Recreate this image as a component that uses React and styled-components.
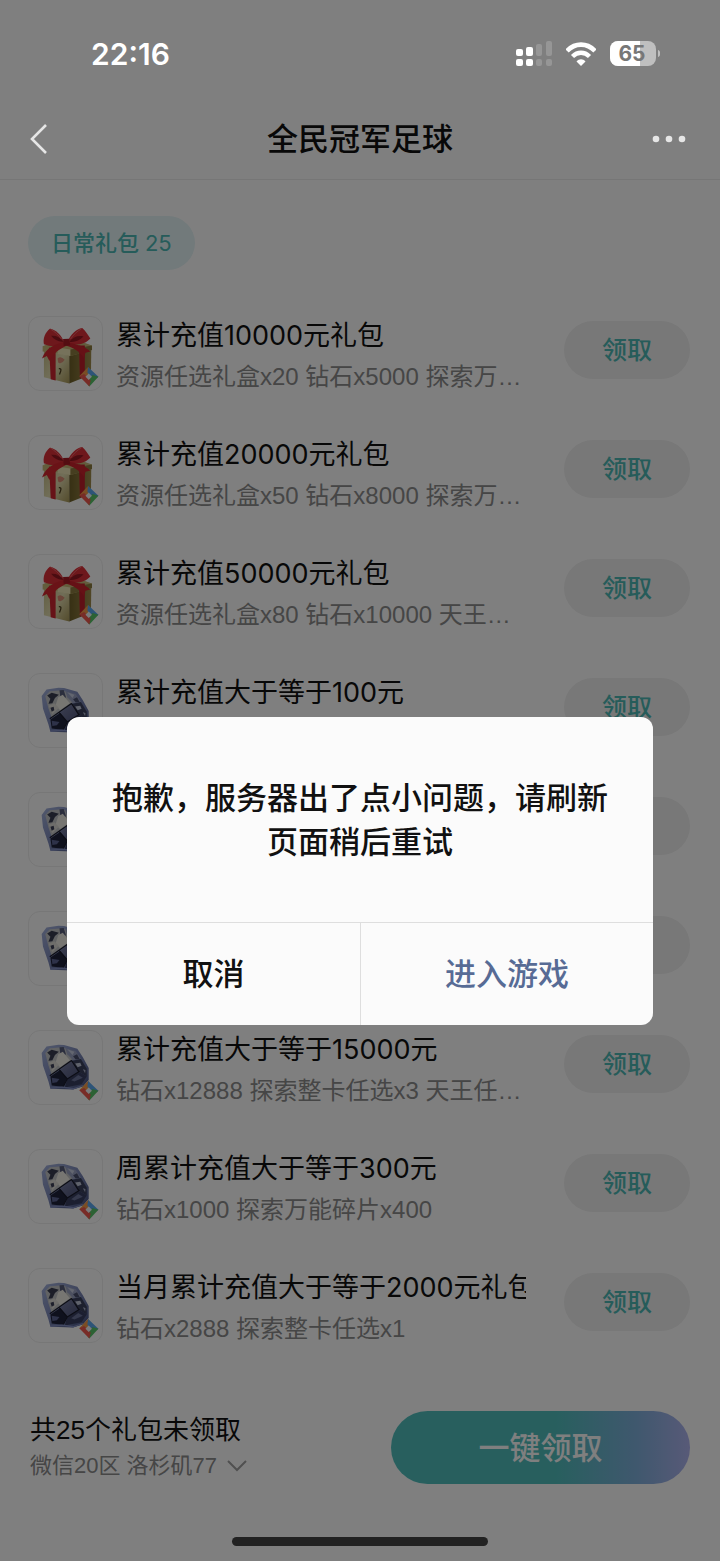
import React, { useState } from 'react';
import styled, { createGlobalStyle } from 'styled-components';

const GlobalStyle = createGlobalStyle`
  * {
    box-sizing: border-box;
  }

  body {
    margin: 0;
    background: #fff;
    font-family: Inter, 'Noto Sans CJK SC', sans-serif;
    color: #111;
  }

  button {
    font-family: inherit;
    border: none;
    padding: 0;
    cursor: pointer;
  }
`;

const Page = styled.div`
  position: relative;
  min-height: 100vh;
  display: flex;
  flex-direction: column;
`;

const StatusBar = styled.div`
  position: relative;
  z-index: 2;
  height: 98px;
  padding: 10px 60px 0 91px;
  display: flex;
  align-items: center;
  justify-content: space-between;
  color: #fff;
`;

const Clock = styled.span`
  font-size: 30px;
  font-weight: 600;
`;

const StatusIcons = styled.div`
  display: flex;
  align-items: center;
  gap: 14px;
`;

const NavBar = styled.header`
  height: 82px;
  padding: 0 28px;
  display: grid;
  grid-template-columns: 60px 1fr 60px;
  align-items: center;
  border-bottom: 1px solid #ececec;
`;

const NavTitle = styled.h1`
  margin: 0;
  font-size: 31px;
  line-height: 44px;
  font-weight: 500;
  text-align: center;
`;

const NavButton = styled.button`
  position: relative;
  z-index: 2;
  height: 60px;
  display: flex;
  align-items: center;
  justify-content: ${({ $end }) => ($end ? 'flex-end' : 'flex-start')};
  background: transparent;
`;

const Main = styled.main`
  flex: 1;
  padding: 36px 30px 0 28px;
`;

const Chip = styled.button`
  display: block;
  height: 54px;
  padding: 0 23px 4px;
  border-radius: 27px;
  background: #e4f4f6;
  color: #4cb8b4;
  font-size: 22px;
  font-weight: 500;
`;

const ChipCount = styled.span`
  font-weight: 400;
`;

const List = styled.ul`
  list-style: none;
  margin: 46px 0 0;
  padding: 0;
  display: flex;
  flex-direction: column;
  gap: 37px;
`;

const Row = styled.li`
  display: flex;
  align-items: flex-start;
`;

const Thumb = styled.div`
  flex: none;
  width: 75px;
  height: 75px;
  border: 1px solid #eee;
  border-radius: 12px;

  svg {
    display: block;
    width: 100%;
    height: 100%;
  }
`;

const Info = styled.div`
  flex: 1;
  min-width: 0;
  margin: 0 38px 0 13px;
`;

const Name = styled.div`
  font-size: 27px;
  line-height: 40px;
  white-space: nowrap;
  overflow: hidden;
`;

const Detail = styled.div`
  font-family: 'Liberation Sans', 'Noto Sans CJK SC', sans-serif;
  font-size: 24px;
  line-height: 42px;
  color: #8c8c8c;
  white-space: nowrap;
  overflow: hidden;
  text-overflow: ellipsis;
`;

const ClaimButton = styled.button`
  flex: none;
  width: 126px;
  height: 58px;
  margin-top: 5px;
  padding-bottom: 4px;
  border-radius: 29px;
  background: #f0f0f0;
  color: #4cb8b4;
  font-size: 25px;
  font-weight: 500;
`;

const Footer = styled.footer`
  padding: 61px 30px 53px;
  display: flex;
  align-items: center;
  justify-content: space-between;
  font-family: 'Liberation Sans', 'Noto Sans CJK SC', sans-serif;
`;

const Total = styled.div`
  font-size: 26px;
  line-height: 36px;
`;

const AreaButton = styled.button`
  display: flex;
  align-items: center;
  gap: 10px;
  background: transparent;
  color: #8c8c8c;
  font-size: 22px;
  line-height: 36px;
`;

const ClaimAll = styled.button`
  width: 299px;
  height: 73px;
  padding-bottom: 4px;
  border-radius: 37px;
  background: linear-gradient(90deg, #50bfbd 0%, #50bfbd 55%, #7fb0dc 82%, #b0b4f0 100%);
  color: #fff;
  font-size: 31px;
  font-weight: 500;
`;

const HomeBar = styled.div`
  width: 256px;
  height: 9px;
  margin: 0 auto 15px;
  border-radius: 5px;
  background: #444;
`;

const Overlay = styled.div`
  position: absolute;
  inset: 0;
  z-index: 1;
  padding: 180px 67px 0;
  display: flex;
  align-items: center;
  background: rgba(0, 0, 0, 0.5);
`;

const Dialog = styled.div`
  width: 100%;
  border-radius: 12px;
  background: #fbfbfb;
  overflow: hidden;
`;

const Message = styled.p`
  margin: 0;
  padding: 59px 40px 58px;
  font-size: 31px;
  line-height: 44px;
  font-weight: 500;
  text-align: center;
`;

const Actions = styled.div`
  display: grid;
  grid-template-columns: 1fr 1fr;
  border-top: 1px solid #dedede;
`;

const ActionButton = styled.button`
  height: 102px;
  padding-bottom: 4px;
  background: transparent;
  color: ${({ $primary }) => ($primary ? '#576b95' : '#111')};
  font-size: 31px;
  font-weight: 500;

  & + & {
    border-left: 1px solid #dedede;
  }
`;

const gifts = [
  { icon: 'gift', name: '累计充值10000元礼包', detail: '资源任选礼盒x20 钻石x5000 探索万能碎片x400' },
  { icon: 'gift', name: '累计充值20000元礼包', detail: '资源任选礼盒x50 钻石x8000 探索万能碎片x800' },
  { icon: 'gift', name: '累计充值50000元礼包', detail: '资源任选礼盒x80 钻石x10000 天王任选x1' },
  { icon: 'diamond', name: '累计充值大于等于100元', detail: '钻石x188' },
  { icon: 'diamond', name: '累计充值大于等于1000元', detail: '钻石x1288' },
  { icon: 'diamond', name: '累计充值大于等于5000元', detail: '钻石x5888' },
  { icon: 'diamond', name: '累计充值大于等于15000元', detail: '钻石x12888 探索整卡任选x3 天王任选x1' },
  { icon: 'diamond', name: '周累计充值大于等于300元', detail: '钻石x1000 探索万能碎片x400' },
  { icon: 'diamond', name: '当月累计充值大于等于2000元礼包', detail: '钻石x2888 探索整卡任选x1' },
];

function Badge() {
  return (
    <g>
      <path d="M149 177 L176 148 L186 160 L166 182 Z" fill="#f49a48" />
      <path d="M176 148 L208 178 L194 188 L174 166 Z" fill="#5aa8f0" />
      <path d="M208 178 L180 208 L170 195 L190 173 Z" fill="#58c468" />
      <path d="M180 208 L149 177 L164 170 L184 190 Z" fill="#f0584e" />
      <path d="M178 168 L188 178 L178 188 L168 178 Z" fill="#f4f6f8" />
    </g>
  );
}

function GiftIcon() {
  return (
    <svg viewBox="-6 -6 225 225" aria-hidden="true">
      <defs>
        <linearGradient id="boxFront" x1="0" y1="0" x2="1" y2="1">
          <stop offset="0" stopColor="#c4bc84" />
          <stop offset="0.5" stopColor="#e2dcb0" />
          <stop offset="1" stopColor="#a89858" />
        </linearGradient>
        <linearGradient id="boxSide" x1="0" y1="0" x2="1" y2="0">
          <stop offset="0" stopColor="#6e6028" />
          <stop offset="1" stopColor="#a08c4c" />
        </linearGradient>
      </defs>
      <path d="M40 88 L118 98 L118 199 L40 180 Z" fill="url(#boxFront)" />
      <path d="M118 98 L186 84 L185 172 L118 199 Z" fill="url(#boxSide)" />
      <path d="M36 84 L66 72 L160 72 L188 82 L188 96 L122 114 L82 106 L36 100 Z" fill="#c6b878" />
      <path d="M82 88 L122 94 L122 114 L82 108 Z" fill="#ece4b6" />
      <path d="M122 94 L188 82 L188 96 L122 114 Z" fill="#8c7c40" />
      <path d="M82 122 Q92 112 104 126 Q94 142 84 134 Z" fill="#d88c74" />
      <path d="M86 153 Q94 152 92 160 L88 171" fill="none" stroke="#4e4020" strokeWidth="4" />
      <path d="M56 88 L76 94 L76 190 L61 186 Z" fill="#cf2630" />
      <path d="M148 82 L166 82 L166 178 L151 184 Z" fill="#c01f2a" />
      <path d="M103 72 C93 50 78 32 58 30 C44 42 36 60 40 78 C66 88 92 84 103 72 Z" fill="#dc3038" />
      <path d="M112 72 C122 48 140 30 158 28 C168 36 176 50 183 60 C168 78 132 86 112 72 Z" fill="#dc3038" />
      <path d="M103 72 C78 76 46 88 34 122 L49 114 L57 130 C67 106 88 94 110 82 Z" fill="#d4262f" />
      <path d="M112 72 C140 78 168 86 183 100 L168 104 L163 120 C150 100 130 88 106 82 Z" fill="#cc222c" />
      <path d="M100 70 C90 56 76 50 62 52 C72 64 86 72 100 70 Z" fill="#941822" />
      <path d="M118 70 C130 56 144 50 162 54 C150 66 134 73 118 70 Z" fill="#941822" />
      <path d="M60 31 C72 38 86 50 94 62 M156 30 C142 38 130 50 122 62" fill="none" stroke="#ee666a" strokeWidth="3" />
      <path d="M99 62 L118 61 L121 81 L101 83 Z" fill="#a81a24" />
      <Badge />
    </svg>
  );
}

function DiamondIcon() {
  return (
    <svg viewBox="-6 -6 225 225" aria-hidden="true">
      <defs>
        <linearGradient id="gem" x1="0" y1="0" x2="1" y2="1">
          <stop offset="0" stopColor="#a4b2dc" />
          <stop offset="0.5" stopColor="#7c88b8" />
          <stop offset="1" stopColor="#44507e" />
        </linearGradient>
        <linearGradient id="belly" x1="0" y1="0" x2="1" y2="1">
          <stop offset="0" stopColor="#7a80a4" />
          <stop offset="1" stopColor="#4c5278" />
        </linearGradient>
      </defs>
      <path d="M33 62 L48 42 L85 36 L102 37 L143 49 L160 75 L178 108 L178 145 L160 165 L130 174 L60 172 L54 150 L37 100 Z" fill="url(#gem)" />
      <path d="M44 62 L58 47 L96 44 L134 58 L128 84 L64 130 L54 100 Z" fill="#c2c4c6" />
      <path d="M50 60 L64 52 L86 58 L74 68 L66 84 L54 86 L60 70 Z" fill="#383c50" />
      <path d="M88 44 L101 43 L108 66 L100 72 L90 60 Z" fill="#565c7a" />
      <path d="M84 66 L98 58 L120 84 L90 106 L76 90 Z" fill="#eeece4" />
      <path d="M55 92 L72 84 L86 98 L66 118 Z" fill="#dedcd6" />
      <path d="M60 98 L70 95 L72 106 L64 110 Z" fill="#3c4058" />
      <path d="M106 47 L138 56 L154 80 L130 84 L112 66 Z" fill="#98a0c0" />
      <path d="M112 50 L134 58 L128 68 Z" fill="#c6cce0" />
      <path d="M130 72 L142 66 L150 80 L138 82 Z" fill="#484e6c" />
      <path d="M128 86 L154 80 L172 110 L172 134 L148 120 Z" fill="#3a405c" />
      <path d="M136 94 L152 92 L156 101 L144 106 Z" fill="#c0c6d8" />
      <path d="M160 112 L168 114 L167 124 Z" fill="#aab0c8" />
      <path d="M90 114 L126 86 L148 120 L112 142 Z" fill="url(#belly)" />
      <path d="M90 114 L112 142 L98 166 L64 162 L60 134 Z" fill="#1e223a" />
      <path d="M64 138 L88 142 L80 152 L66 154 Z" fill="#5c6492" />
      <path d="M112 142 L148 120 L172 134 L156 158 L104 168 Z" fill="#383e60" />
      <path d="M124 146 L146 130 L160 138 L134 150 Z" fill="#6a7298" />
      <path d="M58 132 L126 84 M88 114 L112 142 L150 118 M126 86 L148 120 M112 142 L98 168" fill="none" stroke="#181a2a" strokeWidth="4" />
      <path d="M60 170 L98 167 L130 172 L160 162" fill="none" stroke="#8490c4" strokeWidth="4" />
      <Badge />
    </svg>
  );
}

function SignalIcon() {
  return (
    <svg width="36" height="26" viewBox="0 0 36 26" fill="#fff" aria-hidden="true">
      <rect x="0" y="8" width="7" height="7" rx="2" />
      <rect x="10" y="6" width="7" height="9" rx="2" />
      <rect x="0" y="18" width="7" height="7" rx="2" />
      <rect x="10" y="18" width="7" height="7" rx="2" />
      <g opacity="0.18">
        <rect x="20" y="3" width="6" height="12" rx="2" />
        <rect x="30" y="0" width="6" height="15" rx="2" />
        <rect x="20" y="18" width="6" height="7" rx="2" />
        <rect x="30" y="18" width="6" height="7" rx="2" />
      </g>
    </svg>
  );
}

function WifiIcon() {
  return (
    <svg width="30" height="24" viewBox="0 0 30 24" aria-hidden="true">
      <path d="M1 9 C9 0.500 21 0.500 29 9" fill="none" stroke="#fff" strokeWidth="4.600" />
      <path d="M6.500 14.500 C11.500 9.500 18.500 9.500 23.500 14.500" fill="none" stroke="#fff" strokeWidth="4.400" />
      <path d="M15 24 L10.500 19.500 C13 16.500 17 16.500 19.500 19.500 Z" fill="#fff" />
    </svg>
  );
}

function BatteryIcon() {
  return (
    <svg width="50" height="26" viewBox="0 0 50 26" aria-hidden="true">
      <rect width="46" height="25" rx="8" fill="#bfbfbf" />
      <path d="M8 0 H30 V25 H8 A8 8 0 0 1 0 17 V8 A8 8 0 0 1 8 0 Z" fill="#fff" />
      <path d="M48 9 C51 10 51 15 48 16 Z" fill="#bfbfbf" />
      <text x="22" y="20" textAnchor="middle" fontFamily="Inter" fontSize="21" fontWeight="700" fill="#777">
        65
      </text>
    </svg>
  );
}

const icons = { gift: GiftIcon, diamond: DiamondIcon };

function GiftRow({ icon, name, detail }) {
  const Icon = icons[icon];
  return (
    <Row>
      <Thumb>
        <Icon />
      </Thumb>
      <Info>
        <Name>{name}</Name>
        <Detail>{detail}</Detail>
      </Info>
      <ClaimButton>领取</ClaimButton>
    </Row>
  );
}

export default function App() {
  const [open, setOpen] = useState(true);

  return (
    <Page>
      <GlobalStyle />
      <StatusBar>
        <Clock>22:16</Clock>
        <StatusIcons>
          <SignalIcon />
          <WifiIcon />
          <BatteryIcon />
        </StatusIcons>
      </StatusBar>
      <NavBar>
        <NavButton aria-label="返回">
          <svg width="22" height="32" viewBox="0 0 22 32" fill="none" stroke="#e6e6e6" strokeWidth="2.600">
            <path d="M18 2 L4 16 L18 30" />
          </svg>
        </NavButton>
        <NavTitle>全民冠军足球</NavTitle>
        <NavButton $end aria-label="更多">
          <svg width="40" height="8" viewBox="0 0 40 8" fill="#e6e6e6">
            <circle cx="4" cy="4" r="3.300" />
            <circle cx="17" cy="4" r="3.300" />
            <circle cx="30" cy="4" r="3.300" />
          </svg>
        </NavButton>
      </NavBar>
      <Main>
        <Chip>
          日常礼包 <ChipCount>25</ChipCount>
        </Chip>
        <List>
          {gifts.map(gift => (
            <GiftRow key={gift.name} {...gift} />
          ))}
        </List>
      </Main>
      <Footer>
        <div>
          <Total>共25个礼包未领取</Total>
          <AreaButton>
            微信20区 洛杉矶77
            <svg width="20" height="12" viewBox="0 0 20 12" fill="none" stroke="#a0a0a0" strokeWidth="2">
              <path d="M1 1 L10 10 L19 1" />
            </svg>
          </AreaButton>
        </div>
        <ClaimAll>一键领取</ClaimAll>
      </Footer>
      <HomeBar />
      {open && (
        <Overlay>
          <Dialog role="alertdialog" aria-modal="true" aria-labelledby="message">
            <Message id="message">抱歉，服务器出了点小问题，请刷新页面稍后重试</Message>
            <Actions>
              <ActionButton onClick={() => setOpen(false)}>取消</ActionButton>
              <ActionButton $primary>进入游戏</ActionButton>
            </Actions>
          </Dialog>
        </Overlay>
      )}
    </Page>
  );
}
